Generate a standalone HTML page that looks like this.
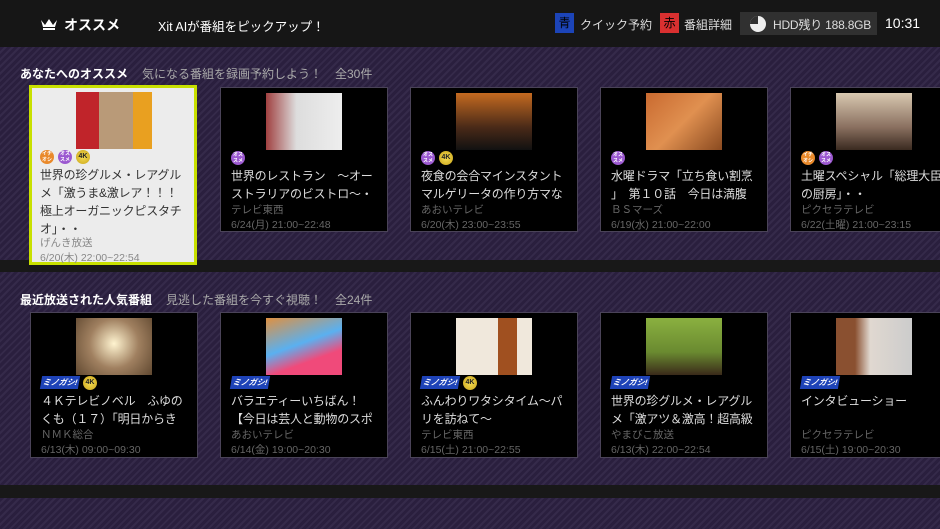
<!DOCTYPE html>
<html><head><meta charset="utf-8"><style>
*{margin:0;padding:0;box-sizing:border-box}
body{width:940px;height:529px;overflow:hidden;position:relative;font-family:"Liberation Sans","Noto Sans CJK JP",sans-serif;background:#2b2040}
.stripe{position:absolute;left:0;width:940px;background:repeating-linear-gradient(135deg,#2a1f3e 0 3px,#352a4a 3px 5px)}
.dark{position:absolute;left:0;width:940px;background:#181818}
.abs{position:absolute;white-space:nowrap}
.card{position:absolute;width:168px;background:#000;border:1px solid #4a4358}
.card .th{position:absolute;left:45px;top:5px;width:76px;height:57px}
.card .bd{position:absolute;left:10px;top:63px;height:14px;display:flex;gap:4px}
.card .t{position:absolute;left:10px;top:79px;font-size:12px;letter-spacing:-0.2px;line-height:18px;color:#ddd;white-space:nowrap;width:156px;overflow:hidden}
.card .s{position:absolute;left:10px;font-size:10.5px;color:#666;white-space:nowrap}
.b{width:14px;height:14px;border-radius:50%;font-size:5px;color:#fff;font-weight:bold;text-align:center;line-height:6px;padding-top:1px}
.bo{background:#e9892a}.bp{background:#9b58d0}.bk{background:radial-gradient(#f5dc55,#c9a418);color:#222;font-size:7px;line-height:13px;padding:0}
.mi{width:38px;height:13px;background:#1e43b8;color:#fff;font-size:8px;font-weight:bold;font-style:italic;line-height:13px;text-align:center;transform:skewX(-10deg)}
.sel{background:#ececec;border:3px solid #c8e000}
.sel .t{color:#333}.sel .s{color:#888}
.h{font-size:12px}
</style></head><body>
<div class="dark" style="top:0;height:47px;background:#161616"></div>
<div class="stripe" style="top:47px;height:213px"></div>
<div class="dark" style="top:260px;height:12px"></div>
<div class="stripe" style="top:272px;height:213px"></div>
<div class="dark" style="top:485px;height:13px"></div>
<div class="stripe" style="top:498px;height:31px"></div>

<svg class="abs" style="left:40px;top:17px" width="18" height="14" viewBox="0 0 18 14"><path d="M1 3 L5 8 L9 2 L13 8 L17 3 L15 10 L3 10 Z" fill="#fff"/><rect x="3" y="11" width="12" height="2" fill="#fff"/></svg>
<div class="abs" style="left:64px;top:15px;font-size:14px;font-weight:bold;color:#fff">オススメ</div>
<div class="abs" style="left:158px;top:16px;font-size:12.5px;color:#fff">Xit AIが番組をピックアップ！</div>
<div class="abs" style="left:555px;top:13px;width:19px;height:20px;background:#1c44b8;color:#000;font-size:12px;text-align:center;line-height:20px">青</div>
<div class="abs" style="left:580px;top:16px;font-size:12px;color:#ddd">クイック予約</div>
<div class="abs" style="left:660px;top:13px;width:19px;height:20px;background:#d93030;color:#000;font-size:12px;text-align:center;line-height:20px">赤</div>
<div class="abs" style="left:684px;top:16px;font-size:12px;color:#ddd">番組詳細</div>
<div class="abs" style="left:740px;top:12px;width:137px;height:23px;background:#303030"></div>
<svg class="abs" style="left:749px;top:15px" width="18" height="18" viewBox="0 0 18 18"><circle cx="9" cy="9" r="8" fill="#eee"/><path d="M9 9 L9 1 A8 8 0 0 0 1 9 Z" fill="#303030"/></svg>
<div class="abs" style="left:773px;top:16px;font-size:12px;letter-spacing:-0.2px;color:#ddd">HDD残り 188.8GB</div>
<div class="abs" style="left:885px;top:15px;font-size:14px;color:#fff">10:31</div>

<div class="abs h" style="left:20px;top:65px;font-weight:bold;color:#fff">あなたへのオススメ</div>
<div class="abs h" style="left:142px;top:65px;color:#aaa">気になる番組を録画予約しよう！</div>
<div class="abs h" style="left:335px;top:65px;color:#aaa">全30件</div>

<div class="card sel" style="left:29px;top:85px;height:180px">
<div class="th" style="left:44px;top:4px;background:linear-gradient(90deg,#c0242a 0 30%,#b99a78 30% 75%,#e9a020 75%)"></div>
<div class="bd" style="left:8px;top:62px"><div class="b bo">イチ<br>オシ</div><div class="b bp">オス<br>スメ</div><div class="b bk">4K</div></div>
<div class="t" style="left:8px;top:78px">世界の珍グルメ・レアグル<br>メ「激うま&amp;激レア！！！<br>極上オーガニックピスタチ<br>オ」・・</div>
<div class="s" style="left:8px;top:147px">げんき放送</div><div class="s" style="left:8px;top:162px">6/20(木) 22:00~22:54</div>
</div>

<div class="card" style="left:220px;top:87px;height:145px">
<div class="th" style="background:linear-gradient(90deg,#a04040,#ddd 40%,#eee)"></div>
<div class="bd"><div class="b bp">オス<br>スメ</div></div>
<div class="t">世界のレストラン　～オー<br>ストラリアのビストロ～・</div>
<div class="s" style="top:114px">テレビ東西</div><div class="s" style="top:129px">6/24(月) 21:00~22:48</div></div>

<div class="card" style="left:410px;top:87px;height:145px">
<div class="th" style="background:linear-gradient(180deg,#c46a20,#4a2a18 60%,#111)"></div>
<div class="bd"><div class="b bp">オス<br>スメ</div><div class="b bk">4K</div></div>
<div class="t">夜食の会合マインスタント<br>マルゲリータの作り方マな</div>
<div class="s" style="top:114px">あおいテレビ</div><div class="s" style="top:129px">6/20(木) 23:00~23:55</div></div>

<div class="card" style="left:600px;top:87px;height:145px">
<div class="th" style="background:linear-gradient(135deg,#c96a30,#e09050 50%,#8a4a20)"></div>
<div class="bd"><div class="b bp">オス<br>スメ</div></div>
<div class="t">水曜ドラマ「立ち食い割烹<br>」　第１０話　今日は満腹</div>
<div class="s" style="top:114px">ＢＳマーズ</div><div class="s" style="top:129px">6/19(水) 21:00~22:00</div></div>

<div class="card" style="left:790px;top:87px;height:145px;width:170px">
<div class="th" style="background:linear-gradient(180deg,#d8c8b0,#8a7060 60%,#3a2a20)"></div>
<div class="bd"><div class="b bo">イチ<br>オシ</div><div class="b bp">オス<br>スメ</div></div>
<div class="t">土曜スペシャル「総理大臣<br>の厨房」・・</div>
<div class="s" style="top:114px">ピクセラテレビ</div><div class="s" style="top:129px">6/22(土曜) 21:00~23:15</div></div>

<div class="abs h" style="left:20px;top:291px;font-weight:bold;color:#fff">最近放送された人気番組</div>
<div class="abs h" style="left:166px;top:291px;color:#aaa">見逃した番組を今すぐ視聴！</div>
<div class="abs h" style="left:335px;top:291px;color:#aaa">全24件</div>

<div class="card" style="left:30px;top:312px;height:146px">
<div class="th" style="background:radial-gradient(circle at 50% 45%,#fff4d0,#a08060 50%,#604830)"></div>
<div class="bd"><div class="mi">ミノガシ!</div><div class="b bk">4K</div></div>
<div class="t">４Ｋテレビノベル　ふゆの<br>くも（１７）「明日からき</div>
<div class="s" style="top:114px">ＮＭＫ総合</div><div class="s" style="top:129px">6/13(木) 09:00~09:30</div></div>

<div class="card" style="left:220px;top:312px;height:146px">
<div class="th" style="background:linear-gradient(160deg,#e09040,#5ab0f0 45%,#f04a7a 70%)"></div>
<div class="bd"><div class="mi">ミノガシ!</div></div>
<div class="t">バラエティーいちばん！<br>【今日は芸人と動物のスポ</div>
<div class="s" style="top:114px">あおいテレビ</div><div class="s" style="top:129px">6/14(金) 19:00~20:30</div></div>

<div class="card" style="left:410px;top:312px;height:146px">
<div class="th" style="background:linear-gradient(90deg,#f0e8dc 0 55%,#a05020 55% 80%,#f0e8dc 80%)"></div>
<div class="bd"><div class="mi">ミノガシ!</div><div class="b bk">4K</div></div>
<div class="t">ふんわりワタシタイム～パ<br>リを訪ねて～</div>
<div class="s" style="top:114px">テレビ東西</div><div class="s" style="top:129px">6/15(土) 21:00~22:55</div></div>

<div class="card" style="left:600px;top:312px;height:146px">
<div class="th" style="background:linear-gradient(180deg,#8ab040,#6a8a30 60%,#3a2a1a)"></div>
<div class="bd"><div class="mi">ミノガシ!</div></div>
<div class="t">世界の珍グルメ・レアグル<br>メ「激アツ＆激高！超高級</div>
<div class="s" style="top:114px">やまびこ放送</div><div class="s" style="top:129px">6/13(木) 22:00~22:54</div></div>

<div class="card" style="left:790px;top:312px;height:146px;width:170px">
<div class="th" style="background:linear-gradient(90deg,#8a5030 0 25%,#e0d8d0 45%,#ccc)"></div>
<div class="bd"><div class="mi">ミノガシ!</div></div>
<div class="t">インタビューショー</div>
<div class="s" style="top:114px">ピクセラテレビ</div><div class="s" style="top:129px">6/15(土) 19:00~20:30</div></div>
</body></html>
